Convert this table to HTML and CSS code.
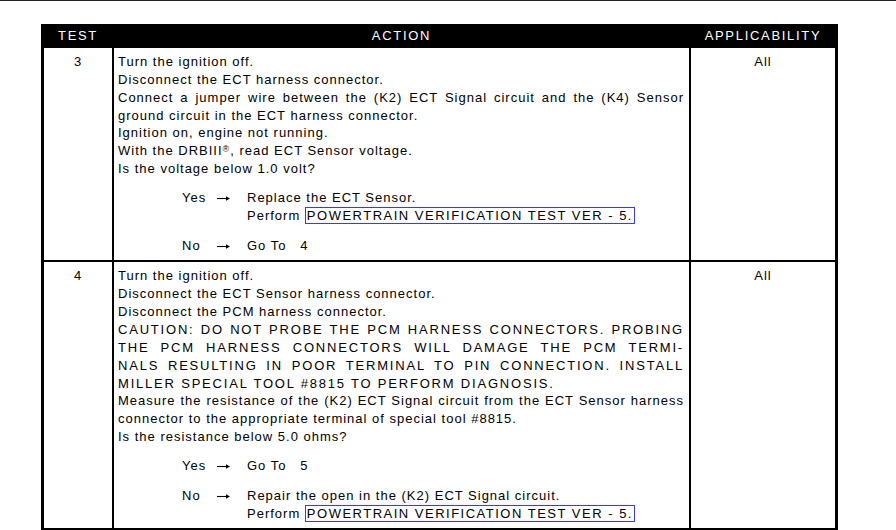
FILE: index.html
```html
<!DOCTYPE html>
<html>
<head>
    <meta charset="utf-8">
    <link rel="stylesheet" href="styles.css">
</head>
<body>
    <div class="rule"></div>
    <div class="chart">
        <div class="row head">
            <div class="cell test">TEST</div>
            <div class="cell action">ACTION</div>
            <div class="cell apply">APPLICABILITY</div>
        </div>

        <div class="row">
            <div class="cell test">3</div>
            <div class="cell action">
                <p>Turn the ignition off.</p>
                <p>Disconnect the ECT harness connector.</p>
                <p><span class="jl">Connect a jumper wire between the (K2) ECT Signal circuit and the (K4) Sensor</span>ground circuit in the ECT harness connector.</p>
                <p>Ignition on, engine not running.</p>
                <p>With the DRBIII<sup>®</sup>, read ECT Sensor voltage.</p>
                <p>Is the voltage below 1.0 volt?</p>
                <div class="answer">
                    <span class="label">Yes</span>
                    <span class="arrow"><svg width="13" height="7" viewBox="0 0 13 7"><path d="M0 3.5H10" stroke="#000" stroke-width="1.1"/><path d="M9 1.3L13 3.5L9 5.7Z"/></svg></span>
                    <div class="result">
                        <p>Replace the ECT Sensor.</p>
                        <p>Perform <a class="ref" href="#">POWERTRAIN VERIFICATION TEST VER - 5.</a></p>
                    </div>
                </div>
                <div class="answer">
                    <span class="label">No</span>
                    <span class="arrow"><svg width="13" height="7" viewBox="0 0 13 7"><path d="M0 3.5H10" stroke="#000" stroke-width="1.1"/><path d="M9 1.3L13 3.5L9 5.7Z"/></svg></span>
                    <div class="result">
                        <p>Go To &nbsp; 4</p>
                    </div>
                </div>
            </div>
            <div class="cell apply">All</div>
        </div>

        <div class="row">
            <div class="cell test">4</div>
            <div class="cell action">
                <p>Turn the ignition off.</p>
                <p>Disconnect the ECT Sensor harness connector.</p>
                <p>Disconnect the PCM harness connector.</p>
                <p class="caps"><span class="jl">CAUTION: DO NOT PROBE THE PCM HARNESS CONNECTORS. PROBING</span><span class="jl">THE PCM HARNESS CONNECTORS WILL DAMAGE THE PCM TERMI-</span><span class="jl">NALS RESULTING IN POOR TERMINAL TO PIN CONNECTION. INSTALL</span>MILLER SPECIAL TOOL #8815 TO PERFORM DIAGNOSIS.</p>
                <p><span class="jl">Measure the resistance of the (K2) ECT Signal circuit from the ECT Sensor harness</span>connector to the appropriate terminal of special tool #8815.</p>
                <p>Is the resistance below 5.0 ohms?</p>
                <div class="answer">
                    <span class="label">Yes</span>
                    <span class="arrow"><svg width="13" height="7" viewBox="0 0 13 7"><path d="M0 3.5H10" stroke="#000" stroke-width="1.1"/><path d="M9 1.3L13 3.5L9 5.7Z"/></svg></span>
                    <div class="result">
                        <p>Go To &nbsp; 5</p>
                    </div>
                </div>
                <div class="answer">
                    <span class="label">No</span>
                    <span class="arrow"><svg width="13" height="7" viewBox="0 0 13 7"><path d="M0 3.5H10" stroke="#000" stroke-width="1.1"/><path d="M9 1.3L13 3.5L9 5.7Z"/></svg></span>
                    <div class="result">
                        <p>Repair the open in the (K2) ECT Signal circuit.</p>
                        <p>Perform <a class="ref" href="#">POWERTRAIN VERIFICATION TEST VER - 5.</a></p>
                    </div>
                </div>
            </div>
            <div class="cell apply">All</div>
        </div>

        <div class="row tail">
            <div class="cell test"></div>
            <div class="cell action"></div>
            <div class="cell apply"></div>
        </div>
    </div>
</body>
</html>
```

FILE: styles.css
```css
body {
    margin: 0;
    background-color: #fff;
    color: #000;
    font-family: "Liberation Sans", Arial, sans-serif;
    font-size: 13px;
    line-height: 17.85px;
    letter-spacing: 1px;
    overflow: hidden;
}
.rule {
    height: 1px;
    background-color: #222;
}
.chart {
    width: 791px;
    margin: 23px 0 0 41px;
    border-left: 3px solid #000;
    border-right: 3px solid #000;
}
.row {
    display: flex;
    border-bottom: 2px solid #000;
}
.cell {
    padding-top: 5px;
}
.test {
    width: 68px;
    border-right: 2px solid #000;
    text-align: center;
}
.action {
    width: 566px;
    padding: 5px 5px 6px 4px;
    border-right: 2px solid #000;
}
.apply {
    flex: 1;
    text-align: center;
}
.head {
    background-color: #000;
    color: #fff;
    height: 24px;
    line-height: 24px;
    letter-spacing: 1.7px;
    border-bottom: none;
}
.head .cell {
    padding: 0;
}
.head .action {
    padding: 0;
    width: 575px;
    text-align: center;
}
p {
    margin: 0;
}
.caps {
    letter-spacing: 1.8px;
}
.jl {
    display: block;
    text-align: justify;
    text-align-last: justify;
}
sup {
    font-size: 9px;
    line-height: 0;
    vertical-align: 3px;
}
.answer {
    display: flex;
    margin: 11.5px 0 0 64px;
}
.label {
    width: 35px;
}
.arrow {
    width: 30px;
}
.arrow svg {
    vertical-align: middle;
}
.ref {
    color: #000;
    text-decoration: none;
    letter-spacing: 1.5px;
    border: 1px solid #3a3af5;
    padding: 0 1px;
}
.tail {
    height: 60px;
}
```
